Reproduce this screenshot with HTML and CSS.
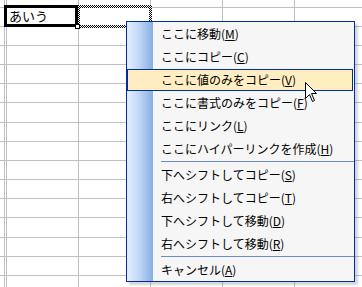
FILE: index.html
```html
<!DOCTYPE html>
<html lang="ja">
<head>
    <meta charset="UTF-8">
    <title>Excel - 右ドラッグのメニュー</title>
    <link rel="stylesheet" href="styles.css">
</head>
<body>
    <div class="sheet">
        <div class="row first"></div>
        <div class="row"></div>
        <div class="row"></div>
        <div class="row"></div>
        <div class="row"></div>
        <div class="row"></div>
        <div class="row tall"></div>
        <div class="row"></div>
        <div class="row"></div>
        <div class="row"></div>
        <div class="row"></div>
        <div class="row"></div>
        <div class="row tall"></div>
        <div class="row"></div>
        <div class="row"></div>
        <div class="row"></div>
    </div>

    <!-- ドラッグ先 (B1) の点線 -->
    <div class="copy-range"><div class="copy-inner"></div></div>
    <!-- アクティブセル A1 -->
    <div class="active-cell">あいう</div>
    <div class="fill-handle"></div>

    <ul class="menu">
        <li class="item">ここに移動(<u>M</u>)</li>
        <li class="item">ここにコピー(<u>C</u>)</li>
        <li class="item on">ここに値のみをコピー(<u>V</u>)</li>
        <li class="item">ここに書式のみをコピー(<u>F</u>)</li>
        <li class="item">ここにリンク(<u>L</u>)</li>
        <li class="item">ここにハイパーリンクを作成(<u>H</u>)</li>
        <li class="sep"></li>
        <li class="item">下へシフトしてコピー(<u>S</u>)</li>
        <li class="item">右へシフトしてコピー(<u>T</u>)</li>
        <li class="item">下へシフトして移動(<u>D</u>)</li>
        <li class="item">右へシフトして移動(<u>R</u>)</li>
        <li class="sep"></li>
        <li class="item">キャンセル(<u>A</u>)</li>
    </ul>

    <svg class="cursor" width="13" height="21" viewBox="0 0 13 21">
        <path d="M0.5 0.5 V16.5 L4.5 12.5 L7.5 19.5 L9.5 18.5 L6.5 11.5 H11.5 Z" fill="#fff" stroke="#000" stroke-width="1"/>
    </svg>
</body>
</html>
```

FILE: styles.css
```css
body {
    margin: 0;
    background: #fff;
    font-family: "Noto Sans CJK JP", "Noto Sans", sans-serif;
    overflow: hidden;
}

.sheet {
    width: 362px;
    height: 287px;
    overflow: hidden;
    background: repeating-linear-gradient(90deg, #c0c0c0 0 1px, transparent 1px 72px);
    background-position: 6px 0;
}

.row {
    height: 19px;
    box-sizing: border-box;
    border-top: 1px solid #c0c0c0;
}

.row.first {
    height: 7px;
    border-top: none;
}

.row.tall {
    height: 20px;
}

.active-cell {
    position: absolute;
    left: 4px;
    top: 5px;
    width: 74px;
    height: 22px;
    box-sizing: border-box;
    border: 3px solid #000;
    background: #fff;
    padding-left: 2px;
    font-size: 13px;
    line-height: 16px;
    color: #000;
}

.copy-range {
    position: absolute;
    left: 77px;
    top: 5px;
    width: 75px;
    height: 23px;
    box-sizing: border-box;
    padding: 3px;
    background: repeating-conic-gradient(#000 0 25%, #fff 0 50%) 0 0 / 2px 2px;
}

.copy-inner {
    height: 100%;
    background: #fff;
}

.fill-handle {
    position: absolute;
    left: 75px;
    top: 24px;
    width: 3px;
    height: 3px;
    border: 1px solid #000;
    background: #fff;
}

.menu {
    position: absolute;
    left: 126px;
    top: 21px;
    width: 227px;
    margin: 0;
    padding: 1px 0 0;
    list-style: none;
    border: 1px solid #002d96;
    background: linear-gradient(90deg, #e3efff, #c3d8f6 45%, #87ade4) no-repeat 0 0 / 26px 100%, #f6f6f6;
    box-shadow: 3px 3px 2px rgba(80, 90, 110, 0.25);
    font-size: 12px;
    color: #000;
}

.item {
    height: 22px;
    line-height: 22px;
    margin-bottom: 1px;
    padding-left: 34px;
    white-space: nowrap;
}

.item:last-child {
    margin-bottom: 0;
}

.item u {
    text-underline-offset: 1px;
}

.item.on {
    height: 20px;
    line-height: 20px;
    margin-right: 1px;
    padding-left: 33px;
    border: 1px solid #002d96;
    background: #ffeec2;
}

.sep {
    height: 3px;
    margin-left: 34px;
    border-top: 1px solid #6a8ccb;
    box-sizing: border-box;
}

.cursor {
    position: absolute;
    left: 305px;
    top: 82px;
}
```
